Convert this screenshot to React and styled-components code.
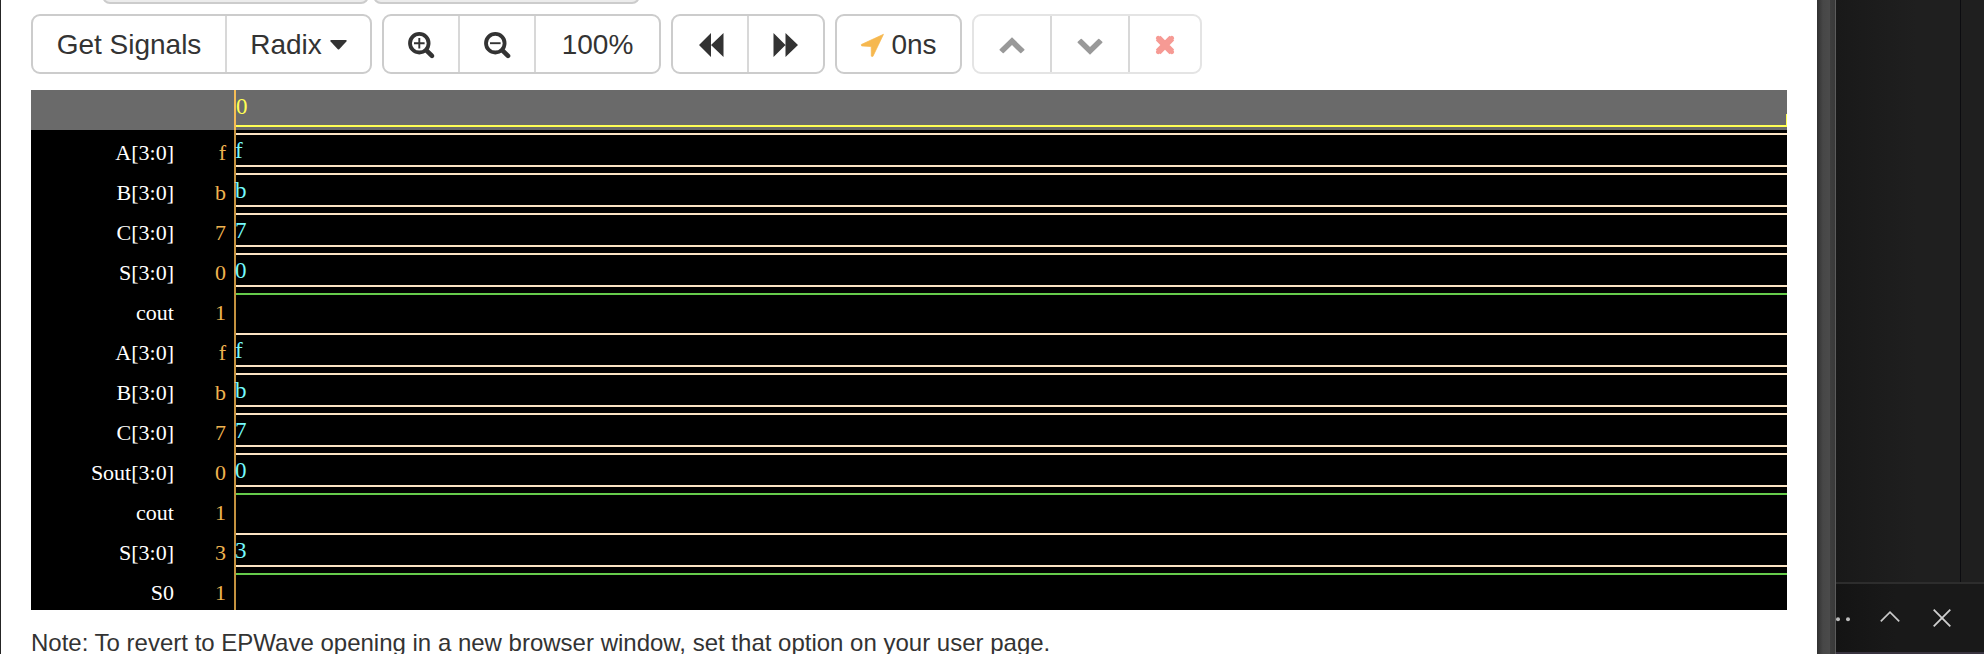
import React from 'react';
import styled, { createGlobalStyle } from 'styled-components';

const Global = createGlobalStyle`
  *, *::before, *::after { box-sizing: border-box; }
  body { margin: 0; background: #1e1e1e; overflow: hidden; }
`;

const Screen = styled.div`
  display: flex;
  width: 1984px;
  height: 654px;
  overflow: hidden;
  font-family: "Liberation Sans", Arial, sans-serif;
  color: #333;
`;

const LeftEdge = styled.div`
  flex: 0 0 1px;
  background: #252525;
`;

const Page = styled.main`
  flex: 0 0 1816px;
  padding-left: 30px;
  background: #fff;
  overflow: hidden;
`;

const TabStrip = styled.div`
  display: flex;
  gap: 4px;
  height: 4px;
  padding-left: 71px;
  align-items: flex-end;
`;

const TabEnd = styled.div`
  width: ${(p) => p.$width}px;
  height: 12px;
  flex: none;
  background: #ececec;
  border: 2px solid #ccc;
  border-radius: 0 0 8px 8px;
`;

const Toolbar = styled.div`
  display: flex;
  gap: 10px;
  margin-top: 10px;
  height: 60px;
`;

const Group = styled.div`
  display: flex;
  border: 2px solid ${(p) => (p.$muted ? '#e4e4e4' : '#ccc')};
  border-radius: 9px;
`;

const Button = styled.button`
  display: flex;
  align-items: center;
  justify-content: center;
  width: ${(p) => p.$width}px;
  padding: 1px 0 0;
  border: 0;
  background: transparent;
  font: 28px/40px "Liberation Sans", Arial, sans-serif;
  color: #333;
  white-space: nowrap;

  & + & { border-left: 2px solid ${(p) => (p.$muted ? '#d8d8d8' : '#ccc')}; }
`;

const Icon = styled.svg`
  display: block;
  flex: none;
  margin: ${(p) => p.$margin || 0};
  overflow: visible;
`;

const Viewer = styled.section`
  display: grid;
  grid-template-columns: 203px 2px 1551px;
  width: 1756px;
  margin-top: 16px;
  font: 22px/26px "Liberation Serif", "Times New Roman", serif;
  background: #000;
`;

const Names = styled.div``;

const NamesHeader = styled.div`
  height: 40px;
  background: #6a6a6a;
`;

const NameRow = styled.div`
  display: grid;
  grid-template-columns: 143px 52px;
  height: 40px;
  padding-top: 10px;
  text-align: right;
  color: #fff;
`;

const Value = styled.span`
  color: #f0b450;
`;

const Cursor = styled.div`
  background: linear-gradient(#f6bd55 40px, #c4923f 40px);
`;

const Waves = styled.div`
  min-width: 0;
`;

const Ruler = styled.div`
  display: flex;
  flex-direction: column;
  height: 40px;
  background: #6a6a6a;
  color: #ffff54;
`;

const Tick = styled.div`
  height: 24px;
  padding-top: 4px;
  font-size: 23px;
`;

const RulerLine = styled.div`
  height: 13px;
  border-bottom: 2px solid #ffff54;
  border-right: 1px solid #ffff54;
`;

const WaveRow = styled.div`
  height: 40px;
  padding-top: 3px;
`;

const Bus = styled.div`
  height: 34px;
  padding-top: 3px;
  border: solid #fbe3c3;
  border-width: 2px 0;
  color: #75fbfd;
  font-size: 23px;
  text-indent: -1px;
`;

const High = styled.div`
  height: 2px;
  background: #66cb4b;
`;

const Note = styled.p`
  margin: 16px 0 0;
  font-size: 24px;
  line-height: 34px;
  white-space: nowrap;
`;

const WindowEdge = styled.div`
  flex: 0 0 19px;
  background: linear-gradient(90deg, #303030 0, #474747 6px, #4b4b4b 13px, #3e3e3e 13px, #3a3a3a 18px, #5c5c5c 18px);
`;

const Editor = styled.aside`
  display: flex;
  flex-direction: column;
  flex: 1;
  min-width: 0;
`;

const EditorBody = styled.div`
  height: 582px;
  padding-right: 23px;
  background: linear-gradient(90deg, #191919, #1f1f1f 80px);
`;

const Minimap = styled.div`
  height: 100%;
  border-right: 1px solid #0c0c10;
`;

const Panel = styled.div`
  display: flex;
  align-items: flex-start;
  height: 72px;
  border-top: 2px solid #2d2d2d;
  border-bottom: 2px solid #38333f;
  background: linear-gradient(90deg, #141414, #191919 60px);
`;

const signals = [
  ['A[3:0]', 'f', true],
  ['B[3:0]', 'b', true],
  ['C[3:0]', '7', true],
  ['S[3:0]', '0', true],
  ['cout', '1', false],
  ['A[3:0]', 'f', true],
  ['B[3:0]', 'b', true],
  ['C[3:0]', '7', true],
  ['Sout[3:0]', '0', true],
  ['cout', '1', false],
  ['S[3:0]', '3', true],
  ['S0', '1', false],
];

function Magnifier({ plus }) {
  return (
    <Icon width="27" height="27" viewBox="0 0 27 27" fill="none" stroke="#333" $margin="1px 0 0 1px">
      <circle cx="11.3" cy="11.2" r="9.3" strokeWidth="3.8" />
      <path d="M18.4 18.3L24 23.9" strokeWidth="4.6" strokeLinecap="round" />
      <path d={plus ? 'M6 11.2H16.6M11.3 6V16.5' : 'M6 11.2H16.6'} strokeWidth="1.9" />
    </Icon>
  );
}

function Seek({ back }) {
  return (
    <Icon width="25" height="24" viewBox="0 0 25 24" fill="#333" $margin={back ? '0 0 0 2px' : '0 2px 0 0'}>
      <path d={back ? 'M0 12L12 0V24ZM12 12L24.5 0V24Z' : 'M0.5 0L12.5 12L0.5 24ZM12.5 0L25 12L12.5 24Z'} />
    </Icon>
  );
}

function Chevron({ down }) {
  return (
    <Icon width="26" height="17" viewBox="0 0 26 17" fill="#999" $margin={down ? '3px 0 0 0' : '2px 0 0 0'}>
      <path
        transform={down ? 'rotate(180 13 8.5)' : undefined}
        d="M13 0.3L25.3 12.2Q25.8 12.7 25.3 13.2L22.3 16.1Q21.8 16.6 21.2 16.1L13 8L4.8 16.1Q4.2 16.6 3.7 16.1L0.7 13.2Q0.2 12.7 0.7 12.2Z"
      />
    </Icon>
  );
}

export default function App() {
  return (
    <Screen>
      <Global />
      <LeftEdge />
      <Page>
        <TabStrip>
          <TabEnd $width={267} />
          <TabEnd $width={267} />
        </TabStrip>
        <Toolbar>
          <Group>
            <Button $width={192}>Get Signals</Button>
            <Button $width={145}>
              Radix
              <Icon width="17" height="10" viewBox="0 0 17 10" fill="#333" $margin="0 0 0 8px">
                <path d="M1 0H16Q17.3 0.3 16.4 1.4L9.2 9.2Q8.5 9.9 7.8 9.2L0.6 1.4Q-0.3 0.3 1 0Z" />
              </Icon>
            </Button>
          </Group>
          <Group>
            <Button $width={74} aria-label="Zoom in"><Magnifier plus /></Button>
            <Button $width={76} aria-label="Zoom out"><Magnifier /></Button>
            <Button $width={125}>100%</Button>
          </Group>
          <Group>
            <Button $width={74} aria-label="Back"><Seek back /></Button>
            <Button $width={76} aria-label="Forward"><Seek /></Button>
          </Group>
          <Group>
            <Button $width={123}>
              <Icon width="23" height="23" viewBox="0 0 23 23" fill="#f6b84f" $margin="1px 7px 0 1px">
                <path d="M22.5 0.3L11.9 22.4L10.3 22.2L10.2 12.6L0.6 11.9L0.3 10.5Z" stroke="#f6b84f" strokeWidth="0.7" strokeLinejoin="round" />
              </Icon>
              0ns
            </Button>
          </Group>
          <Group $muted>
            <Button $muted $width={76} aria-label="Move up"><Chevron /></Button>
            <Button $muted $width={78} aria-label="Move down"><Chevron down /></Button>
            <Button $muted $width={72} aria-label="Remove">
              <Icon width="20" height="20" viewBox="0 0 20 20" $margin="1px 0 0 0">
                <path d="M3.2 3.2L16.8 16.8M16.8 3.2L3.2 16.8" stroke="#f69a94" strokeWidth="6.6" />
                <path d="M3.2 3.2L16.8 16.8M16.8 3.2L3.2 16.8" stroke="#f69a94" strokeWidth="4.6" strokeLinecap="round" />
              </Icon>
            </Button>
          </Group>
        </Toolbar>
        <Viewer>
          <Names>
            <NamesHeader />
            {signals.map(([name, value], i) => (
              <NameRow key={i}>
                <span>{name}</span>
                <Value>{value}</Value>
              </NameRow>
            ))}
          </Names>
          <Cursor />
          <Waves>
            <Ruler>
              <Tick>0</Tick>
              <RulerLine />
            </Ruler>
            {signals.map(([, value, bus], i) => (
              <WaveRow key={i}>{bus ? <Bus>{value}</Bus> : <High />}</WaveRow>
            ))}
          </Waves>
        </Viewer>
        <Note>Note: To revert to EPWave opening in a new browser window, set that option on your user page.</Note>
      </Page>
      <WindowEdge />
      <Editor>
        <EditorBody>
          <Minimap />
        </EditorBody>
        <Panel>
          <Icon width="14" height="5" viewBox="0 0 14 5" fill="#bdbdbd" $margin="33px 0 0 0">
            <circle cx="2" cy="2.2" r="2" />
            <circle cx="12" cy="2.2" r="2" />
          </Icon>
          <Icon width="20" height="11" viewBox="0 0 20 11" fill="none" stroke="#c8c8c8" strokeWidth="1.7" $margin="27px 0 0 30px">
            <path d="M0.8 10.3L10 1.1L19.2 10.3" />
          </Icon>
          <Icon width="18" height="18" viewBox="0 0 18 18" fill="none" stroke="#cfcfcf" strokeWidth="1.8" $margin="25px 0 0 33px">
            <path d="M0.7 0.7L17.3 17.3M17.3 0.7L0.7 17.3" />
          </Icon>
        </Panel>
      </Editor>
    </Screen>
  );
}
